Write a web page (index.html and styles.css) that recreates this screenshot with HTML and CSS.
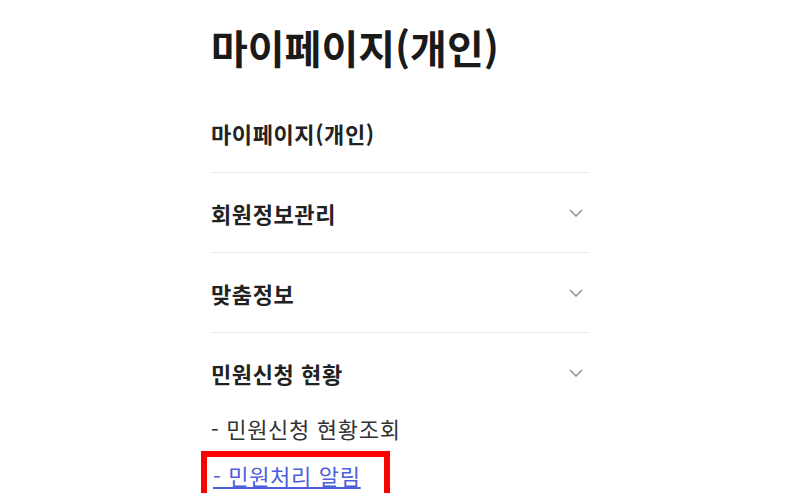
FILE: index.html
```html
<!DOCTYPE html>
<html lang="ko">

<head>
    <meta charset="UTF-8">
    <title>마이페이지(개인)</title>
    <link rel="stylesheet" href="styles.css">
</head>

<body>
    <div id="wrap">
        <h1 class="page-title">마이페이지(개인)</h1>
        <ul class="menu">
            <li class="menu-item">
                <div class="menu-head">마이페이지(개인)</div>
            </li>
            <li class="menu-item">
                <div class="menu-head">회원정보관리
                    <svg class="arrow" width="14" height="8" viewBox="0 0 14 8"><path d="M1 1l6 6 6-6" /></svg>
                </div>
            </li>
            <li class="menu-item">
                <div class="menu-head">맞춤정보
                    <svg class="arrow" width="14" height="8" viewBox="0 0 14 8"><path d="M1 1l6 6 6-6" /></svg>
                </div>
            </li>
            <li class="menu-item open">
                <div class="menu-head">민원신청 현황
                    <svg class="arrow" width="14" height="8" viewBox="0 0 14 8"><path d="M1 1l6 6 6-6" /></svg>
                </div>
                <ul class="sub-menu">
                    <li>- 민원신청 현황조회</li>
                    <!-- 선택된 메뉴 강조 박스 -->
                    <li class="current"><a href="#">- 민원처리 알림</a></li>
                </ul>
            </li>
        </ul>
    </div>
</body>

</html>
```

FILE: styles.css
```css
body {
    margin: 0;
    background: #fff;
    font-family: "Noto Sans CJK KR", "Noto Sans", sans-serif;
    color: #222;
}

#wrap {
    width: 378px;
    margin: 0 auto;
    padding-top: 22px;
}

.page-title {
    margin: 0 0 21px;
    font-size: 40px;
    line-height: 50px;
    font-weight: 700;
    color: #1a1a1a;
}

.menu {
    list-style: none;
    margin: 0;
    padding: 0;
}

.menu-item {
    border-bottom: 1px solid #ebebeb;
}

.menu-item.open {
    border-bottom: none;
}

.menu-head {
    height: 79px;
    display: flex;
    align-items: center;
    justify-content: space-between;
    font-size: 22px;
    letter-spacing: 0.6px;
    font-weight: 700;
    color: #222;
}

.menu-item.open .menu-head {
    height: 80px;
}

.arrow {
    margin-right: 6px;
    fill: none;
    stroke: #999;
    stroke-width: 1.6;
}

.sub-menu {
    list-style: none;
    margin: 0;
    padding: 0;
}

.sub-menu li {
    font-size: 22px;
    letter-spacing: 0.7px;
    line-height: 30px;
    color: #333;
}

.sub-menu li.current {
    margin-top: 14px;
}

.sub-menu li.current a {
    display: block;
    box-sizing: border-box;
    width: 177px;
    height: 36px;
    margin-left: -4px;
    padding: 2px 0 0 6px;
    line-height: 32px;
    color: #4c5fdc;
    text-decoration: underline;
    outline: 6px solid #ff0000;
}
```
